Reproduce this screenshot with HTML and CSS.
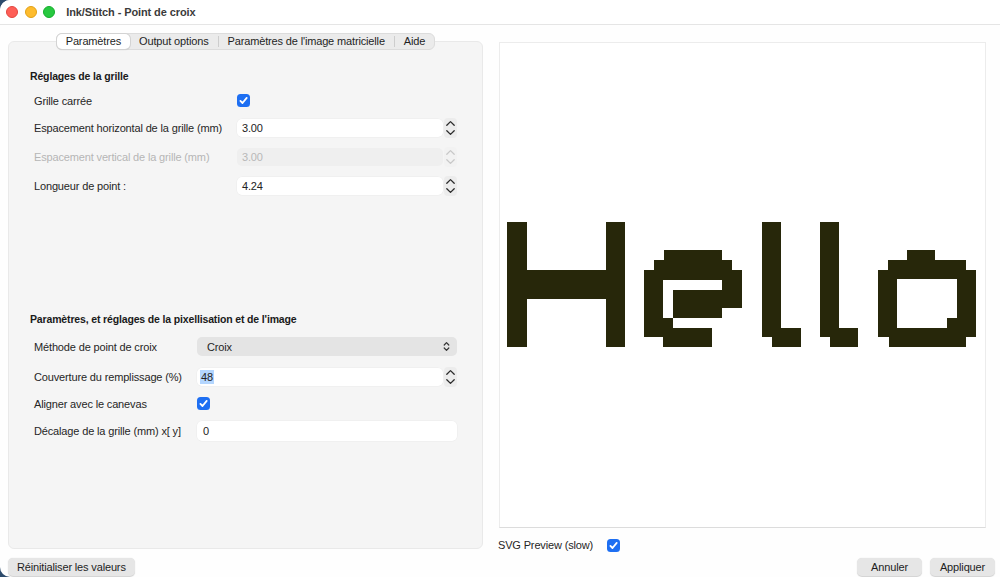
FILE: index.html
```html
<!DOCTYPE html>
<html lang="fr">
<head>
<meta charset="utf-8">
<title>Ink/Stitch - Point de croix</title>
<link rel="stylesheet" href="styles.css">
</head>
<body>
<div class="window">
  <div class="titlebar">
    <div class="lights">
      <span class="light red"></span><span class="light yellow"></span><span class="light green"></span>
    </div>
    <div class="title">Ink/Stitch - Point de croix</div>
  </div>

  <div class="main">
    <div class="leftcol">
      <div class="tabs">
        <div class="tab active">Paramètres</div>
        <div class="tab">Output options</div>
        <div class="sep"></div>
        <div class="tab">Paramètres de l'image matricielle</div>
        <div class="sep"></div>
        <div class="tab">Aide</div>
      </div>
      <div class="panel">
        <div class="section-title">Réglages de la grille</div>
        <div class="rows s1">
          <div class="row short">
            <div class="label">Grille carrée</div>
            <span class="check"><svg width="13" height="13" viewBox="0 0 13 13"><path d="M3.4 6.9 L5.5 9 L9.7 3.9" fill="none" stroke="#fff" stroke-width="1.8" stroke-linecap="round" stroke-linejoin="round"/></svg></span>
          </div>
          <div class="row">
            <div class="label">Espacement horizontal de la grille (mm)</div>
            <div class="ctrl">
              <div class="input">3.00</div>
              <div class="stepper"><svg width="13" height="20" viewBox="0 0 13 20"><path d="M2.8 7.2 L6.5 3.6 L10.2 7.2 M2.8 12.8 L6.5 16.4 L10.2 12.8" fill="none" stroke="#2b2b2b" stroke-width="1.3" stroke-linecap="round" stroke-linejoin="round"/></svg></div>
            </div>
          </div>
          <div class="row disabled">
            <div class="label">Espacement vertical de la grille (mm)</div>
            <div class="ctrl">
              <div class="input">3.00</div>
              <div class="stepper"><svg width="13" height="20" viewBox="0 0 13 20"><path d="M2.8 7.2 L6.5 3.6 L10.2 7.2 M2.8 12.8 L6.5 16.4 L10.2 12.8" fill="none" stroke="#c8c8c8" stroke-width="1.3" stroke-linecap="round" stroke-linejoin="round"/></svg></div>
            </div>
          </div>
          <div class="row">
            <div class="label">Longueur de point :</div>
            <div class="ctrl">
              <div class="input">4.24</div>
              <div class="stepper"><svg width="13" height="20" viewBox="0 0 13 20"><path d="M2.8 7.2 L6.5 3.6 L10.2 7.2 M2.8 12.8 L6.5 16.4 L10.2 12.8" fill="none" stroke="#2b2b2b" stroke-width="1.3" stroke-linecap="round" stroke-linejoin="round"/></svg></div>
            </div>
          </div>
        </div>

        <div class="section-title second">Paramètres, et réglages de la pixellisation et de l'image</div>
        <div class="rows s2">
          <div class="row r27">
            <div class="label">Méthode de point de croix</div>
            <div class="select">
              <span>Croix</span>
              <svg width="7" height="11" viewBox="0 0 7 11"><path d="M1.2 4 L3.5 1.6 L5.8 4 M1.2 7 L3.5 9.4 L5.8 7" fill="none" stroke="#333" stroke-width="1.2" stroke-linecap="round" stroke-linejoin="round"/></svg>
            </div>
          </div>
          <div class="row r27 gap3">
            <div class="label">Couverture du remplissage (%)</div>
            <div class="ctrl">
              <div class="input"><span class="sel">48</span></div>
              <div class="stepper"><svg width="13" height="20" viewBox="0 0 13 20"><path d="M2.8 7.2 L6.5 3.6 L10.2 7.2 M2.8 12.8 L6.5 16.4 L10.2 12.8" fill="none" stroke="#2b2b2b" stroke-width="1.3" stroke-linecap="round" stroke-linejoin="round"/></svg></div>
            </div>
          </div>
          <div class="row r27">
            <div class="label">Aligner avec le canevas</div>
            <span class="check"><svg width="13" height="13" viewBox="0 0 13 13"><path d="M3.4 6.9 L5.5 9 L9.7 3.9" fill="none" stroke="#fff" stroke-width="1.8" stroke-linecap="round" stroke-linejoin="round"/></svg></span>
          </div>
          <div class="row r27">
            <div class="label">Décalage de la grille (mm) x[ y]</div>
            <div class="input wide">0</div>
          </div>
        </div>
      </div>
    </div>

    <div class="rightcol">
      <div class="preview">
        <svg class="hello" width="485" height="484" viewBox="500 43 485 484">
          <g fill="#27270a" fill-rule="evenodd">
            <path d="M507 222 H527 V270 H606 V222 H625 V347 H606 V299 H527 V347 H507 Z"/>
            <path d="M664 250 H722 V260 H732 V270 H742 V308 H722 V318 H673 V328 H712 V347 H663 V337 H644 V270 H654 V260 H664 Z M663 280 V318 H673 V290 H722 V280 Z"/>
            <path d="M762 222 H781 V328 H801 V347 H772 V337 H762 Z"/>
            <path d="M820 222 H839 V328 H858 V347 H830 V337 H820 Z"/>
            <path d="M907 250 H935 V260 H966 V270 H976 V337 H966 V347 H889 V337 H878 V270 H888 V260 H907 Z M897 279 V328 H947 V318 H957 V279 Z"/>
          </g>
        </svg>
      </div>
      <div class="svgrow">
        <span>SVG Preview (slow)</span>
        <span class="check"><svg width="13" height="13" viewBox="0 0 13 13"><path d="M3.4 6.9 L5.5 9 L9.7 3.9" fill="none" stroke="#fff" stroke-width="1.8" stroke-linecap="round" stroke-linejoin="round"/></svg></span>
      </div>
    </div>
  </div>

  <div class="footer">
    <div class="btn">Réinitialiser les valeurs</div>
    <div class="spacer"></div>
    <div class="btn">Annuler</div>
    <div class="btn">Appliquer</div>
  </div>
</div>
</body>
</html>
```

FILE: styles.css
```css
html, body {
  margin: 0;
  padding: 0;
}

body {
  width: 1000px;
  height: 577px;
  overflow: hidden;
  background: #2d4b6c;
  font-family: "Liberation Sans", Arial, sans-serif;
  font-size: 11px;
  letter-spacing: -0.15px;
  color: #262626;
}

.window {
  width: 1000px;
  height: 577px;
  background: #fefefe;
  border-radius: 10px 0 0 10px;
  overflow: hidden;
  display: flex;
  flex-direction: column;
}

/* title bar */
.titlebar {
  height: 24px;
  flex-shrink: 0;
  border-bottom: 1px solid #e5e5e5;
  display: flex;
  align-items: center;
  background: #fff;
}

.lights {
  display: flex;
  gap: 6.4px;
  padding-left: 6.4px;
}

.light {
  width: 12px;
  height: 12px;
  border-radius: 50%;
  box-sizing: border-box;
}

.light.red { background: #fe5f57; border: 0.5px solid #e2463f; }
.light.yellow { background: #febc2e; border: 0.5px solid #e1a116; }
.light.green { background: #28c840; border: 0.5px solid #14ae2c; }

.title {
  margin-left: 11px;
  font-weight: bold;
  font-size: 11px;
  letter-spacing: -0.1px;
  color: #3b3b3b;
}

/* main area */
.main {
  display: flex;
  align-items: flex-start;
  gap: 16px;
  padding: 8px 14px 0 8px;
}

.leftcol {
  width: 475px;
  display: flex;
  flex-direction: column;
  align-items: center;
}

.tabs {
  position: relative;
  z-index: 1;
  display: flex;
  height: 17px;
  box-sizing: border-box;
  border: 1px solid #dcdcdc;
  background: #ebebeb;
  border-radius: 6px;
}

.tab {
  padding: 0 9px;
  line-height: 15px;
  color: #1f1f1f;
  white-space: nowrap;
}

.tab.active {
  background: #fff;
  border-radius: 5px;
  box-shadow: 0 0 0 1px #d3d3d3, 0 1px 1.5px rgba(0, 0, 0, 0.12);
}

.sep {
  width: 1px;
  height: 11px;
  background: #cdcdcd;
  align-self: center;
}

.panel {
  width: 475px;
  height: 508px;
  box-sizing: border-box;
  margin-top: -9px;
  background: #f5f5f5;
  border: 1px solid #e9e9e9;
  border-radius: 6px;
  padding: 28px 25px 0;
}

.section-title {
  font-weight: bold;
  font-size: 10.5px;
  line-height: 13px;
  margin-left: -4px;
  color: #1a1a1a;
  white-space: nowrap;
}

.section-title.second {
  margin-top: 113px;
}

.rows.s1 {
  margin-top: 5px;
}

.rows.s2 {
  margin-top: 7px;
}

.row {
  display: flex;
  align-items: center;
  height: 29px;
}

.row.short {
  height: 25px;
}

.row.r27 {
  height: 27px;
}

.row.gap3 {
  margin-top: 3px;
}

.label {
  flex-shrink: 0;
  white-space: nowrap;
  color: #262626;
}

.s1 .label { width: 203px; }
.s2 .label { width: 163px; }

.ctrl {
  flex: 1;
  display: flex;
  align-items: center;
  gap: 1px;
}

.input {
  flex: 1;
  height: 18px;
  line-height: 18px;
  background: #fff;
  border-radius: 5px;
  padding: 0 5px;
  color: #222;
  box-shadow: 0 0 0 0.5px rgba(0, 0, 0, 0.04);
}

.input.wide {
  height: 20px;
  line-height: 20px;
  padding: 0 6px;
}

.stepper {
  width: 13px;
  height: 20px;
  background: #ececec;
  border-radius: 4px;
}

.stepper svg {
  display: block;
}

.sel {
  background: #b4d6fe;
  padding: 1px 1px;
  margin-left: -2px;
}

.disabled .label { color: #b5b5b5; }
.disabled .input { background: #efefef; color: #b8b8b8; box-shadow: none; }
.disabled .stepper { background: #f2f2f2; }

.select {
  flex: 1;
  height: 19px;
  display: flex;
  align-items: center;
  justify-content: space-between;
  padding: 0 7px 0 10px;
  background: #e4e4e4;
  border-radius: 5px;
  color: #1f1f1f;
}

.select svg {
  display: block;
}

.check {
  width: 13px;
  height: 13px;
  border-radius: 3.5px;
  background: #1e6ff2;
  display: inline-flex;
}

.check svg {
  display: block;
}

/* right column */
.rightcol {
  width: 487px;
  padding-top: 9px;
}

.preview {
  height: 486px;
  box-sizing: border-box;
  border: 1px solid #ececec;
  border-bottom-color: #dcdcdc;
  background: #fff;
}

.hello {
  display: block;
}

.svgrow {
  display: flex;
  align-items: center;
  gap: 14px;
  height: 18px;
  margin-top: 8px;
  margin-left: -1px;
  color: #262626;
}

/* footer */
.footer {
  display: flex;
  gap: 8px;
  padding: 4px 5px 0 8px;
}

.spacer {
  flex: 1;
}

.btn {
  height: 18px;
  line-height: 18px;
  min-width: 65px;
  box-sizing: border-box;
  padding: 0 9px;
  text-align: center;
  background: #e6e6e6;
  border-radius: 5px;
  color: #1e1e1e;
  box-shadow: 0 0.5px 1px rgba(0, 0, 0, 0.18);
  white-space: nowrap;
}
```
